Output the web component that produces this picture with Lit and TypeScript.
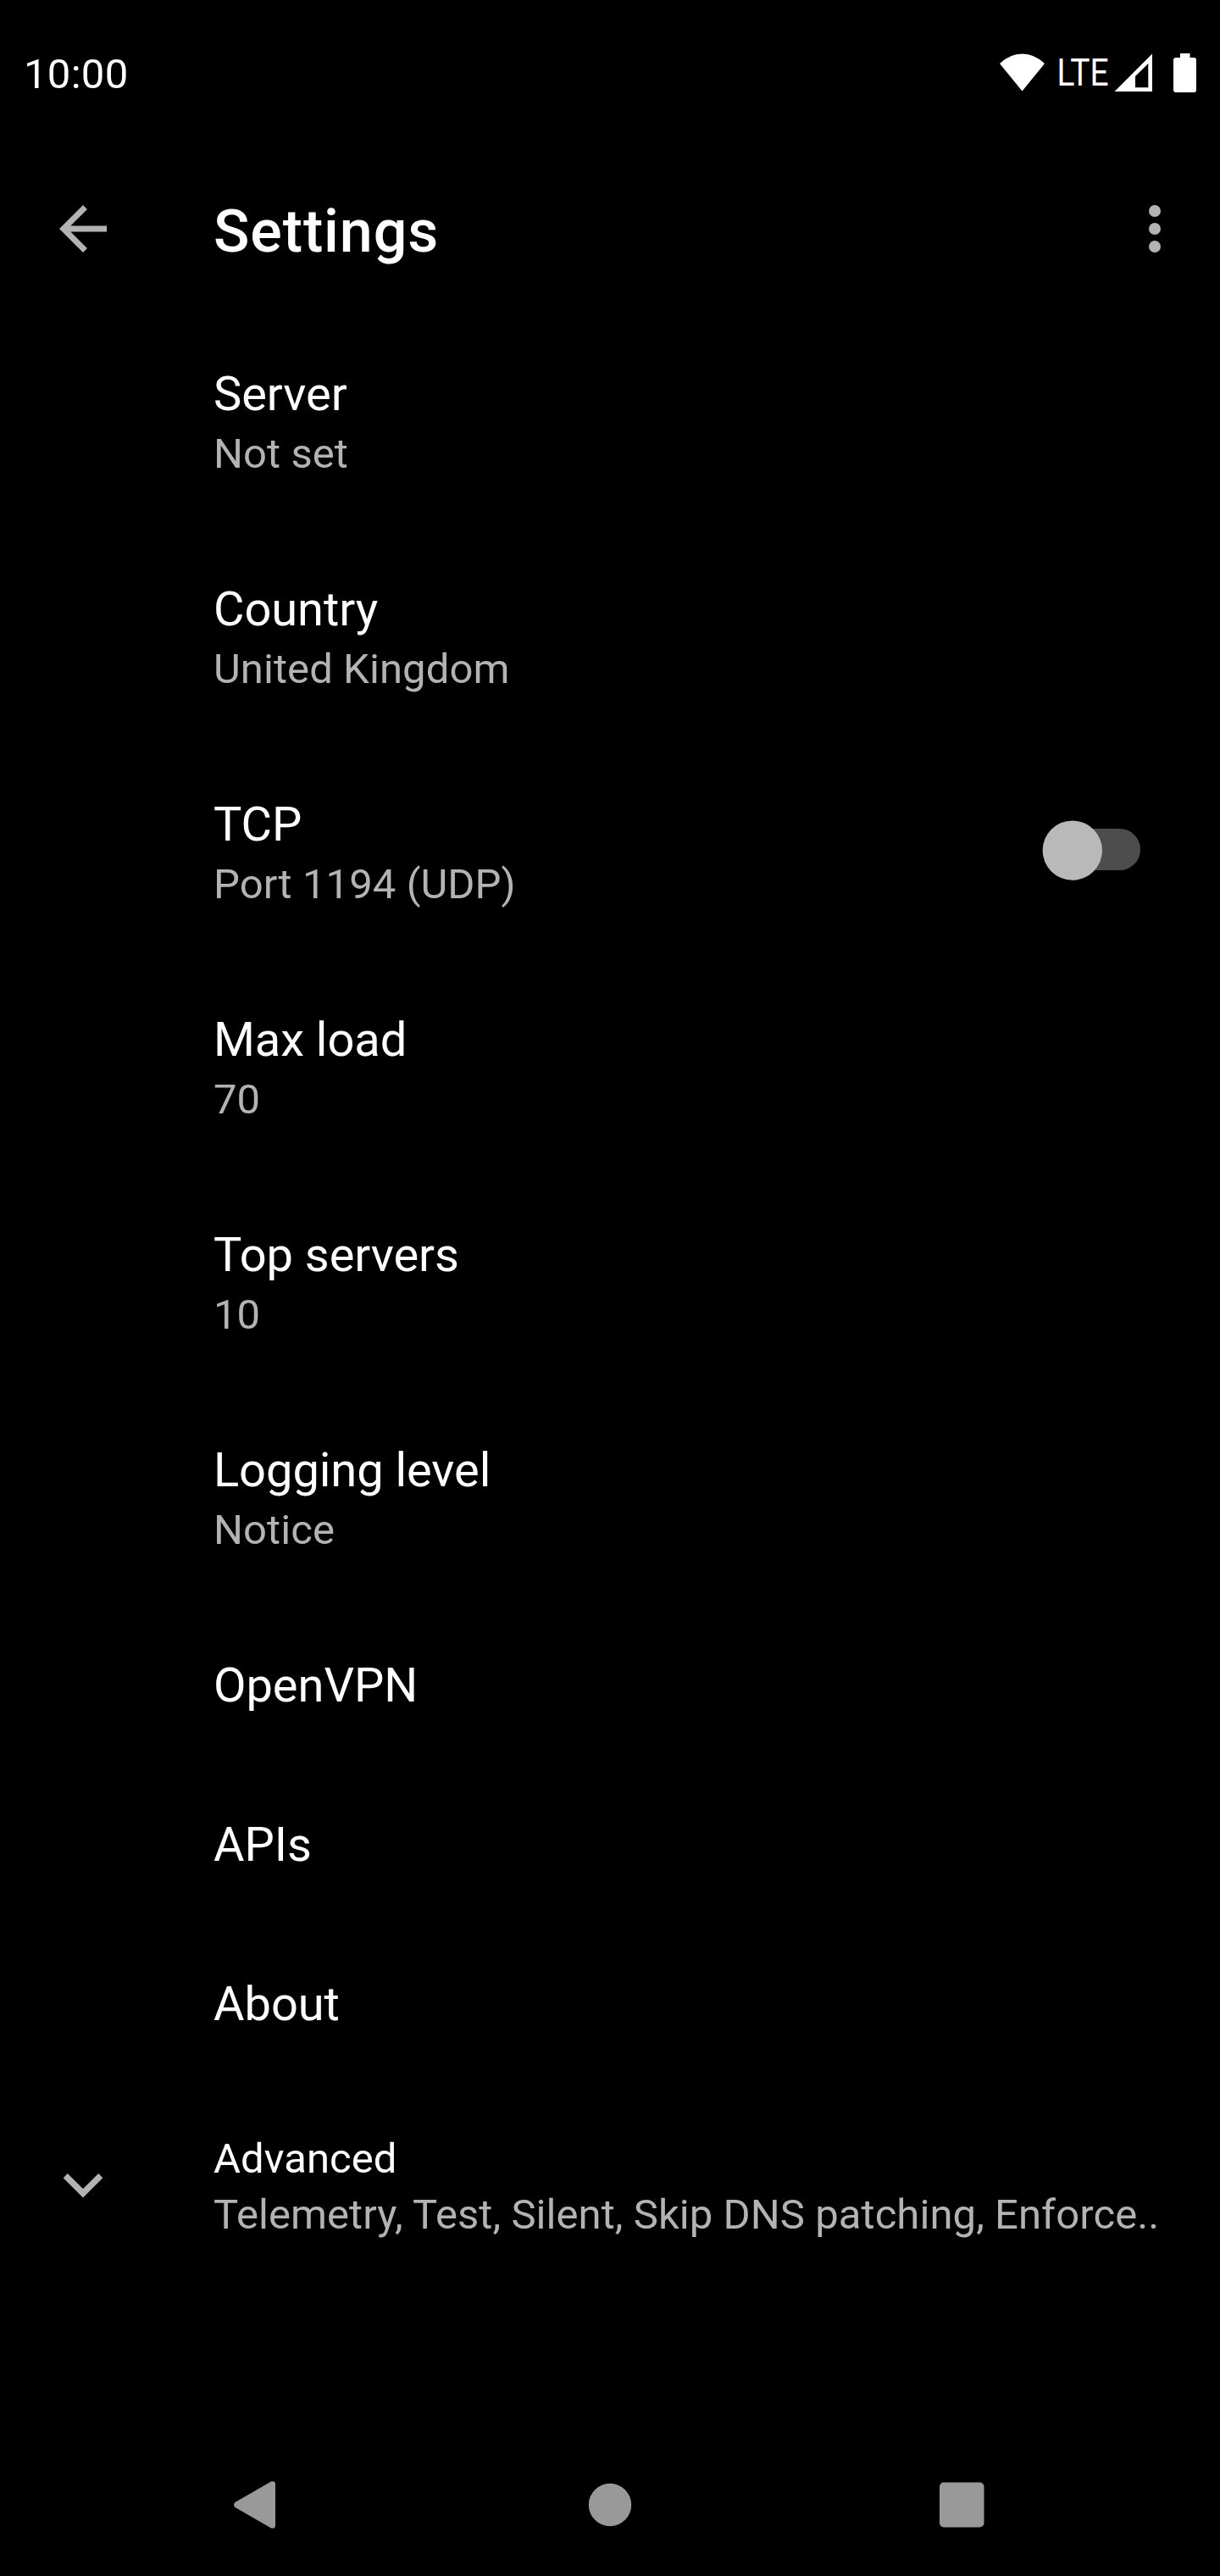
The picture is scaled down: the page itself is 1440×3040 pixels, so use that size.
import { LitElement, html, css, nothing } from "lit";
import { customElement, property } from "lit/decorators.js";

@customElement("pref-row")
class PrefRow extends LitElement {
  @property() label = "";
  @property() summary = "";
  static styles = css`
    :host { display: flex; align-items: center; padding: 56px 56px 56px 252px; }
    .text { flex: 1; min-width: 0; }
    .title { font-size: 56px; line-height: 76px; color: #fff; white-space: nowrap; letter-spacing: -0.05px; }
    .summary { font-size: 49px; line-height: 66px; height: 66px; color: #b3b3b3; white-space: nowrap; letter-spacing: 0.08px; }
  `;
  render() {
    return html`<div class="text">
        <div class="title">${this.label}</div>
        ${this.summary ? html`<div class="summary">${this.summary}</div>` : nothing}
      </div>
      <slot></slot>`;
  }
}

@customElement("app-root")
class AppRoot extends LitElement {
  static styles = css`
    :host { display: block; }
    .screen { display: flex; flex-direction: column; width: 1440px; height: 3040px; background: #000; color: #fff; font-family: Roboto, "Liberation Sans", sans-serif; overflow: hidden; }
    svg { display: block; flex: none; }
    .status { display: flex; justify-content: space-between; align-items: center; height: 170px; padding: 0 20px 0 28px; box-sizing: border-box; }
    .clock { font-size: 49px; line-height: 58px; padding-top: 6px; letter-spacing: 0.3px; }
    .bar { display: flex; align-items: center; height: 200px; padding: 0 35px 0 56px; box-sizing: border-box; }
    .heading { flex: 1; margin: 0; padding: 5px 0 0 112px; font-size: 70px; font-weight: 500; line-height: 82px; letter-spacing: 0.9px; }
    .list { flex: 1; padding-top: 1px; }
    .toggle { margin-right: 34px; }
    .advanced { display: flex; align-items: center; padding: 56px 0 0 56px; }
    .adv-text { padding-left: 112px; white-space: nowrap; font-size: 49px; line-height: 66px; letter-spacing: 0.07px; }
    .muted { color: #b3b3b3; }
    .nav { display: flex; justify-content: center; align-items: center; height: 168px; gap: 331px; }
  `;
  render() {
    return html`<div class="screen">
      <div class="status">
        <div class="clock">10:00</div>
        <svg width="250" height="70" viewBox="1170 50 250 70" fill="#fff">
          <path d="M1180 75Q1192 63.5 1206.500 63.500Q1221 63.500 1233 75L1206.500 107.500Z" />
          <text x="1247.500" y="101" font-size="43.600" textLength="61" lengthAdjust="spacingAndGlyphs">LTE</text>
          <path fill-rule="evenodd" d="M1315.500 108L1360 63.500V108ZM1340 103.300H1355.300V75L1340 90Z" />
          <path d="M1393 63H1404.500V68H1409.500Q1412 68 1412 71V106Q1412 109 1409.500 109H1388Q1385 109 1385 106V71Q1385 68 1388 68H1393Z" />
        </svg>
      </div>
      <div class="bar">
        <svg width="84" height="84" viewBox="0 0 24 24" fill="#b3b3b3"><path d="M20 11H7.830l5.590-5.590L12 4l-8 8 8 8 1.410-1.410L7.830 13H20z" /></svg>
        <h1 class="heading">Settings</h1>
        <svg width="84" height="84" viewBox="0 0 24 24" fill="#b3b3b3"><circle cx="12" cy="6" r="2" /><circle cx="12" cy="12" r="2" /><circle cx="12" cy="18" r="2" /></svg>
      </div>
      <div class="list">
        <pref-row label="Server" summary="Not set"></pref-row>
        <pref-row label="Country" summary="United Kingdom"></pref-row>
        <pref-row label="TCP" summary="Port 1194 (UDP)">
          <svg class="toggle" width="120" height="80" viewBox="1230 966 120 80">
            <rect x="1248" y="978" width="98" height="49" rx="24.500" fill="#4d4d4d" />
            <circle cx="1265.800" cy="1003.600" r="35.200" fill="#b9b9b9" />
          </svg>
        </pref-row>
        <pref-row label="Max load" summary="70"></pref-row>
        <pref-row label="Top servers" summary="10"></pref-row>
        <pref-row label="Logging level" summary="Notice"></pref-row>
        <pref-row label="OpenVPN"></pref-row>
        <pref-row label="APIs"></pref-row>
        <pref-row label="About"></pref-row>
        <div class="advanced">
          <svg width="84" height="84" viewBox="56 2539 84 84" fill="#b3b3b3"><path d="M79.800 2565L98 2583L116.200 2565L121.300 2570.200L98 2593.400L74.700 2570.200Z" /></svg>
          <div class="adv-text">
            <div>Advanced</div>
            <div class="muted">Telemetry, Test, Silent, Skip DNS patching, Enforce..</div>
          </div>
        </div>
      </div>
      <div class="nav">
        <svg width="84" height="84" viewBox="263 2914 84 84" fill="#999"><path d="M277.500 2953L320 2928.500Q325 2927 325 2932V2980Q325 2985 320 2983.500L277.500 2959Q274.500 2956 277.500 2953Z" /></svg>
        <svg width="84" height="84" viewBox="678 2914 84 84" fill="#999"><circle cx="720" cy="2956" r="25.200" /></svg>
        <svg width="84" height="84" viewBox="1093 2914 84 84" fill="#999"><rect x="1109" y="2929.500" width="52.500" height="53" rx="5" /></svg>
      </div>
    </div>`;
  }
}
